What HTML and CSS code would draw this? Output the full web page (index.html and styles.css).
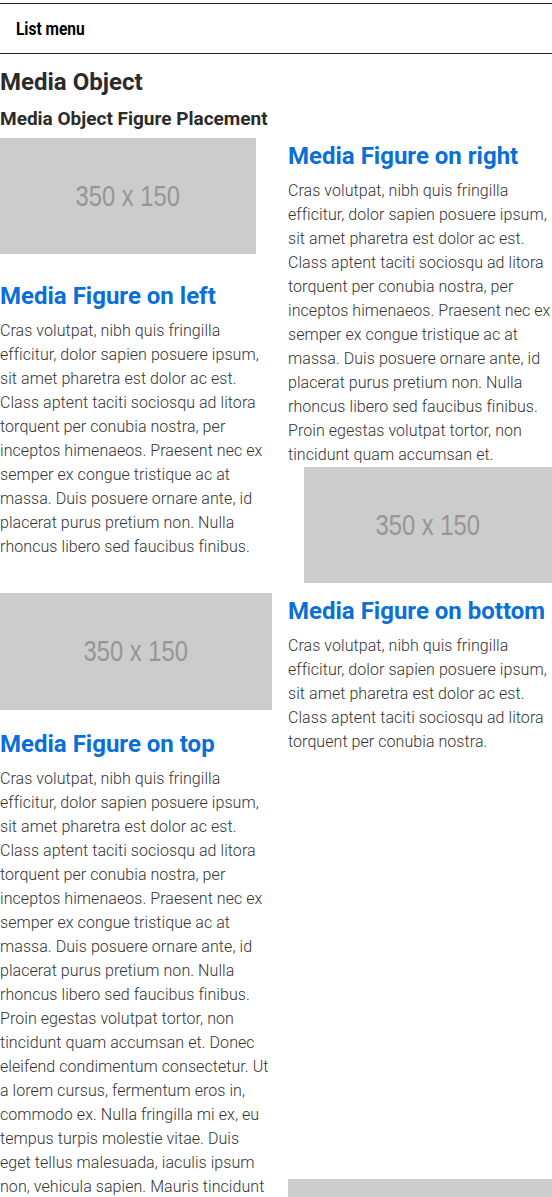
FILE: index.html
```html
<!DOCTYPE html>
<html lang="en">
<head>
<meta charset="utf-8">
<title>Media Object</title>
<link rel="stylesheet" href="styles.css">
</head>
<body>
<header class="topbar">
  <span class="topbar-title">List menu</span>
</header>
<main class="page">
  <h1 class="page-title">Media Object</h1>
  <h2 class="section-title">Media Object Figure Placement</h2>
  <div class="media-grid">
    <article class="media media--left">
      <div class="placeholder placeholder--left"><span class="placeholder-text">350 x 150</span></div>
      <div class="media-body">
        <h3 class="media-title">Media Figure on left</h3>
        <p class="media-text">Cras volutpat, nibh quis fringilla efficitur, dolor sapien posuere ipsum, sit amet pharetra est dolor ac est. Class aptent taciti sociosqu ad litora torquent per conubia nostra, per inceptos himenaeos. Praesent nec ex semper ex congue tristique ac at massa. Duis posuere ornare ante, id placerat purus pretium non. Nulla rhoncus libero sed faucibus finibus.</p>
      </div>
    </article>
    <article class="media media--right">
      <div class="media-body">
        <h3 class="media-title">Media Figure on right</h3>
        <p class="media-text">Cras volutpat, nibh quis fringilla efficitur, dolor sapien posuere ipsum, sit amet pharetra est dolor ac est. Class aptent taciti sociosqu ad litora torquent per conubia nostra, per inceptos himenaeos. Praesent nec ex semper ex congue tristique ac at massa. Duis posuere ornare ante, id placerat purus pretium non. Nulla rhoncus libero sed faucibus finibus. Proin egestas volutpat tortor, non tincidunt quam accumsan et.</p>
      </div>
      <div class="placeholder placeholder--right"><span class="placeholder-text">350 x 150</span></div>
    </article>
    <article class="media media--top">
      <div class="placeholder placeholder--top"><span class="placeholder-text">350 x 150</span></div>
      <div class="media-body">
        <h3 class="media-title">Media Figure on top</h3>
        <p class="media-text">Cras volutpat, nibh quis fringilla efficitur, dolor sapien posuere ipsum, sit amet pharetra est dolor ac est. Class aptent taciti sociosqu ad litora torquent per conubia nostra, per inceptos himenaeos. Praesent nec ex semper ex congue tristique ac at massa. Duis posuere ornare ante, id placerat purus pretium non. Nulla rhoncus libero sed faucibus finibus. Proin egestas volutpat tortor, non tincidunt quam accumsan et. Donec eleifend condimentum consectetur. Ut a lorem cursus, fermentum eros in, commodo ex. Nulla fringilla mi ex, eu tempus turpis molestie vitae. Duis eget tellus malesuada, iaculis ipsum non, vehicula sapien. Mauris tincidunt turpis sed augue dictum, sed facilisis lorem tristique. Aliquam erat volutpat. Sed vel dolor sed lectus pretium aliquet vitae at nisl.</p>
      </div>
    </article>
    <article class="media media--bottom">
      <div class="media-body">
        <h3 class="media-title">Media Figure on bottom</h3>
        <p class="media-text">Cras volutpat, nibh quis fringilla efficitur, dolor sapien posuere ipsum, sit amet pharetra est dolor ac est. Class aptent taciti sociosqu ad litora torquent per conubia nostra.</p>
      </div>
      <div class="placeholder placeholder--bottom"><span class="placeholder-text">350 x 150</span></div>
    </article>
  </div>
</main>
</body>
</html>
```

FILE: styles.css
```css
* { box-sizing: border-box; }

html, body {
  margin: 0;
  padding: 0;
  background: #ffffff;
}

body {
  font-family: Roboto, "Noto Sans", Arial, sans-serif;
  color: #333333;
}

.topbar {
  margin-top: 3px;
  height: 51px;
  border-top: 1px solid #222222;
  border-bottom: 1px solid #222222;
  display: flex;
  align-items: center;
  padding-left: 16px;
}

.topbar-title {
  display: inline-block;
  font-family: Roboto, sans-serif;
  font-weight: 700;
  font-size: 18px;
  color: #000000;
  transform: scaleX(0.86);
  transform-origin: left center;
}

.page {
  padding: 0;
}

.page-title {
  margin: 14px 0 0;
  font-size: 24px;
  line-height: 28px;
  font-weight: 700;
  color: #2b2b2b;
}

.section-title {
  margin: 11px 0 0;
  font-size: 19px;
  line-height: 23px;
  font-weight: 700;
  color: #2b2b2b;
}

.media-grid {
  margin-top: 8px;
  display: grid;
  grid-template-columns: 272px 264px;
  column-gap: 16px;
  row-gap: 10px;
}

.media {
  display: flex;
  flex-direction: column;
}

.media-title {
  margin: 4px 0 8px;
  font-size: 24px;
  line-height: 29px;
  font-weight: 700;
  color: #0a6fd6;
}

.media-text {
  margin: 0;
  font-size: 16px;
  line-height: 24px;
  font-weight: 300;
  letter-spacing: 0.06px;
  color: #333333;
}

.placeholder {
  background: #cccccc;
  display: flex;
  align-items: center;
  justify-content: center;
  overflow: hidden;
}

.placeholder-text {
  font-family: "Liberation Sans", Arial, sans-serif;
  font-size: 29px;
  color: #969696;
  transform: scaleX(0.82);
  white-space: nowrap;
}

.placeholder--left {
  width: 256px;
  height: 116px;
  margin-bottom: 24px;
}

.placeholder--right {
  width: 248px;
  height: 116px;
  margin-left: 16px;
}

.placeholder--top {
  width: 272px;
  height: 117px;
  margin-bottom: 16px;
}

.placeholder--bottom {
  width: 264px;
  height: 116px;
  margin-top: auto;
}
```
